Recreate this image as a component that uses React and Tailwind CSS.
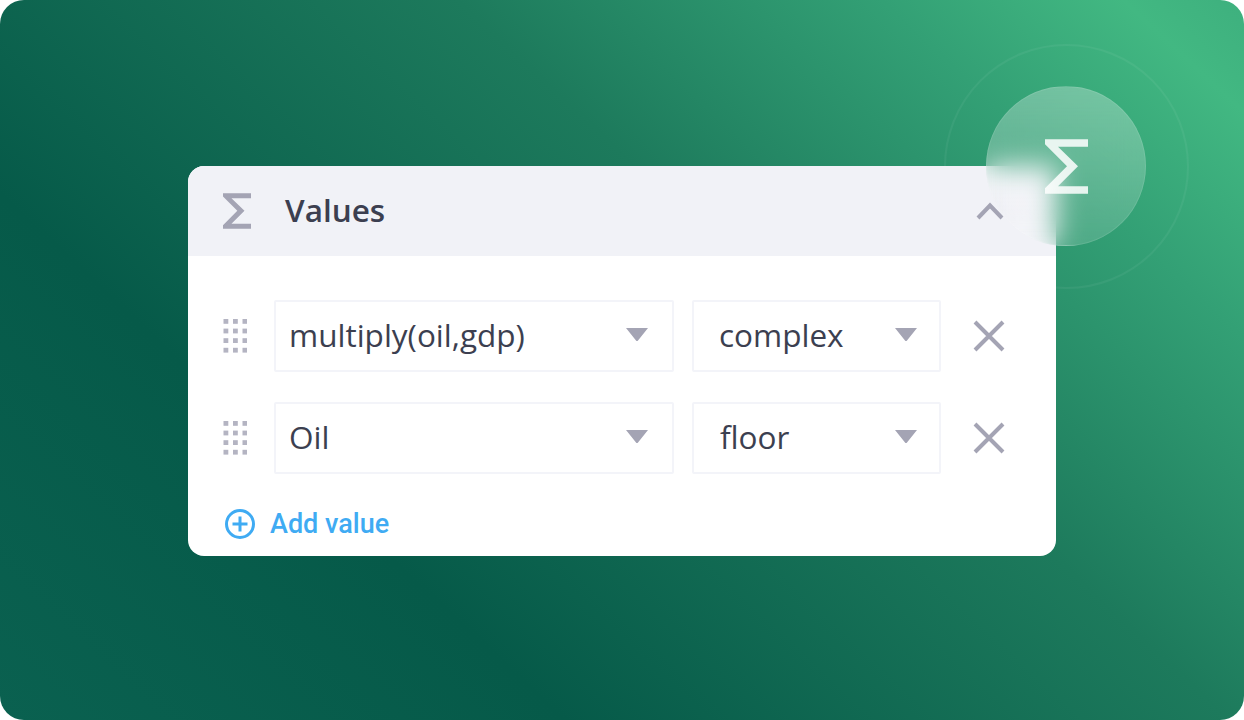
import React from 'react';

const SIGMA = "0,0 43,0 43,7.5 13,7.5 33,27 13,47 43,47 43,54.5 0,54.5 0,49 22,27 0,5";

const Sigma = ({ className }) => (
  <svg viewBox="0 0 43 54.5" className={className} fill="currentColor">
    <polygon points={SIGMA} />
  </svg>
);

const Grip = () => (
  <svg width="24" height="34" viewBox="0 0 24 34" className="shrink-0 text-[#b4b4c2]" fill="currentColor">
    {[0, 1, 2, 3].map((r) =>
      [0, 1, 2].map((c) => (
        <rect key={`${r}-${c}`} x={c * 9.5 + 0.5} y={r * 9.6} width="4.8" height="4.8" />
      ))
    )}
  </svg>
);

const Caret = () => (
  <svg width="22" height="13" viewBox="0 0 22 13" className="mb-[3px] shrink-0 text-[#a4a4b4]" fill="currentColor">
    <path d="M0 0H22L12 12.5a1.2 1.2 0 0 1-2 0Z" />
  </svg>
);

const Close = () => (
  <svg width="32" height="32" viewBox="0 0 32 32" className="text-[#a4a4b4]" fill="none" stroke="currentColor" strokeWidth="4">
    <path d="M2 2L30 30M30 2L2 30" />
  </svg>
);

const Select = ({ label, className }) => (
  <div className={`flex h-[72px] items-center justify-between rounded-[2px] border-2 border-[#f3f4f9] bg-white ${className}`}>
    <span className="mb-[2px] text-[31.5px] leading-none text-[#3c3f50]">{label}</span>
    <Caret />
  </div>
);

const Row = ({ name, fn, fnPad }) => (
  <div className="flex items-center">
    <div className="flex w-[86px] pl-[35px]">
      <Grip />
    </div>
    <Select label={name} className="w-[400px] pl-[13px] pr-[24px]" />
    <Select label={fn} className={`ml-[18px] w-[249px] pr-[22px] ${fnPad}`} />
    <div className="ml-[32px]">
      <Close />
    </div>
  </div>
);

export default function App() {
  return (
    <div className="relative h-[720px] w-[1244px] overflow-hidden bg-white">
      <div
        className="relative h-[720px] overflow-hidden rounded-[24px] pl-[188px] pt-[166px] bg-[linear-gradient(43deg,#0a6150_0%,#065a49_28%,#1d7a5c_61%,#33a075_82%,#42b882_94%,#3eb07e_100%)]"
        style={{ fontFamily: '"Open Sans", sans-serif' }}
      >
        <div className="absolute left-[944px] top-[44px] size-[245px] rounded-full border-2 border-white/[0.05]" />

        <div className="relative h-[390px] w-[868px] overflow-hidden rounded-l-[16px] rounded-br-[16px] bg-white">
          <div className="flex h-[90px] items-center bg-[#f1f2f7] pl-[35px]">
            <Sigma className="h-[36px] w-[28px] text-[#a4a4b4]" />
            <span className="mb-[2px] ml-[34px] w-[100px] text-[31.5px] font-semibold leading-none text-[#3c3f50]">Values</span>
            <svg width="28" height="18" viewBox="0 0 28 18" className="ml-[591px] text-[#a4a4b4]" fill="none" stroke="currentColor" strokeWidth="4">
              <path d="M2 16L14 3.5L26 16" />
            </svg>
          </div>
          <div className="flex flex-col gap-[30px] pt-[44px]">
            <Row name="multiply(oil,gdp)" fn="complex" fnPad="pl-[25px]" />
            <Row name="Oil" fn="floor" fnPad="pl-[26px]" />
          </div>
          <div className="mt-[34px] flex items-center pl-[36px] text-[#3fabf3]">
            <svg width="32" height="32" viewBox="0 0 32 32" fill="none" stroke="currentColor" strokeWidth="3">
              <circle cx="16" cy="16" r="13.5" />
              <path d="M16 8.5V23.5M8.5 16H23.5" />
            </svg>
            <span
              className="ml-[14px] text-[27px] font-medium leading-none"
              style={{ fontFamily: 'Roboto, sans-serif' }}
            >
              Add value
            </span>
          </div>
        </div>

        <div className="absolute left-[986px] top-[86px] flex size-[160px] items-center justify-center rounded-full border border-white/10 bg-gradient-to-b from-white/30 to-white/15 backdrop-blur-[14px]">
          <Sigma className="h-[55px] w-[43px] text-white/85" />
        </div>
      </div>
    </div>
  );
}
